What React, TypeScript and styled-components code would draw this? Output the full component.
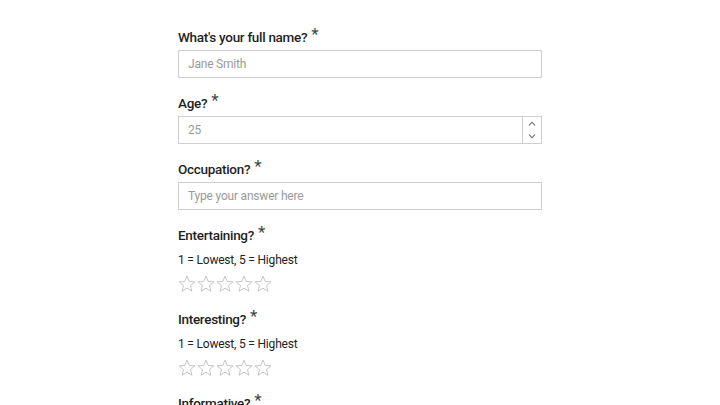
import React from "react";
import styled, { createGlobalStyle } from "styled-components";

const Global = createGlobalStyle`
  html, body { margin: 0; padding: 0; background: #ffffff; }
  body { font-family: Roboto, "Noto Sans", "Liberation Sans", sans-serif; color: #161616; }
  * { box-sizing: border-box; }
`;

const Page = styled.div`
  display: flex;
  justify-content: center;
  padding-top: 27px;
`;

const Form = styled.form`
  width: 364px;
  display: flex;
  flex-direction: column;
`;

const Field = styled.div<{ $gap: number }>`
  display: flex;
  flex-direction: column;
  margin-bottom: ${(p) => p.$gap}px;
`;

const Label = styled.label`
  font-size: 13.5px;
  font-weight: 500;
  letter-spacing: -0.3px;
  line-height: 20px;
  color: #1f1f1f;
  display: flex;
  align-items: flex-start;
  height: 20px;
`;

const Star = styled.span`
  font-size: 17px;
  font-weight: 400;
  line-height: 14px;
  margin-left: 4px;
  color: #444;
`;

const Hint = styled.div`
  font-size: 12px;
  letter-spacing: -0.2px;
  line-height: 18px;
  color: #222;
  margin-top: 6px;
`;

const Box = styled.div`
  margin-top: 3px;
  height: 28px;
  border: 1px solid #cfcfcf;
  display: flex;
  align-items: stretch;
  background: #fff;
`;

const TextInput = styled.input`
  flex: 1;
  border: none;
  outline: none;
  padding: 0 9px;
  font-family: inherit;
  font-size: 12px;
  letter-spacing: -0.2px;
  color: #222;
  background: transparent;
  &::placeholder { color: #9a9a9a; }
`;

const Spinner = styled.div`
  width: 19px;
  border-left: 1px solid #cfcfcf;
  display: flex;
  flex-direction: column;
  justify-content: center;
  align-items: center;
  gap: 8px;
`;

const Stars = styled.div`
  display: flex;
  gap: 1px;
  margin-top: 5px;
  height: 20px;
  align-items: center;
`;

const StarIcon = () => (
  <svg width="18" height="18" viewBox="0 0 24 24" fill="none" stroke="#b8b8b8" strokeWidth="1.1" strokeLinejoin="miter">
    <polygon points="12,1.5 14.9,8.6 22.5,9.2 16.7,14.1 18.5,21.6 12,17.6 5.5,21.6 7.3,14.1 1.5,9.2 9.1,8.6" />
  </svg>
);

const Chevron = ({ up }: { up?: boolean }) => (
  <svg width="8" height="5" viewBox="0 0 8 5" fill="none" stroke="#666" strokeWidth="1.1">
    {up ? <polyline points="1,4.5 4,1.2 7,4.5" /> : <polyline points="1,0.5 4,3.8 7,0.5" />}
  </svg>
);

const RatingField = ({ label }: { label: string }) => (
  <Field $gap={15}>
    <Label>
      {label}
      <Star>*</Star>
    </Label>
    <Hint>1 = Lowest, 5 = Highest</Hint>
    <Stars>
      {[0, 1, 2, 3, 4].map((i) => (
        <StarIcon key={i} />
      ))}
    </Stars>
  </Field>
);

export default function App() {
  return (
    <>
      <Global />
      <Page>
        <Form>
          <Field $gap={15}>
            <Label>
              What's your full name?<Star>*</Star>
            </Label>
            <Box>
              <TextInput placeholder="Jane Smith" />
            </Box>
          </Field>
          <Field $gap={15}>
            <Label>
              Age?<Star>*</Star>
            </Label>
            <Box>
              <TextInput placeholder="25" />
              <Spinner>
                <Chevron up />
                <Chevron />
              </Spinner>
            </Box>
          </Field>
          <Field $gap={15}>
            <Label>
              Occupation?<Star>*</Star>
            </Label>
            <Box>
              <TextInput placeholder="Type your answer here" />
            </Box>
          </Field>
          <RatingField label="Entertaining?" />
          <RatingField label="Interesting?" />
          <RatingField label="Informative?" />
        </Form>
      </Page>
    </>
  );
}
